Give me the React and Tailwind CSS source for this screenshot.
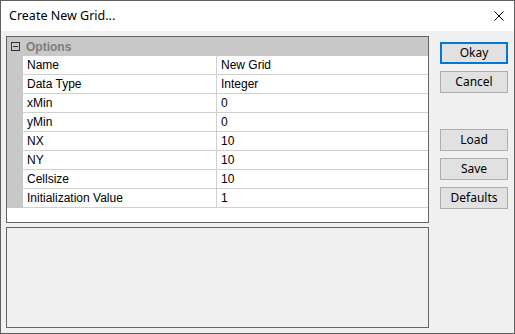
import React from 'react';

const rows = [
  ['Name', 'New Grid'],
  ['Data Type', 'Integer'],
  ['xMin', '0'],
  ['yMin', '0'],
  ['NX', '10'],
  ['NY', '10'],
  ['Cellsize', '10'],
  ['Initialization Value', '1'],
];

const uiFont = { fontFamily: '"Segoe UI", "Noto Sans", sans-serif' };
const gridFont = { fontFamily: '"Liberation Sans", Arial, sans-serif' };

const Button = ({ label, primary }) => (
  <button
    type="button"
    style={uiFont}
    className={
      primary
        ? 'flex h-[22px] w-[68px] items-center justify-center border-2 border-[#0078d7] bg-[#e1e1e1] text-[12px] leading-none text-black'
        : 'flex h-[22px] w-[68px] items-center justify-center border border-[#adadad] bg-[#e1e1e1] text-[12px] leading-none text-black'
    }
  >
    {label}
  </button>
);

export default function App() {
  return (
    <div className="flex h-[334px] w-[515px] flex-col border border-[#5f5f5f] bg-[#f0f0f0]">
      {/* title bar */}
      <div className="flex h-[30px] items-center justify-between bg-white pl-[8px] pr-[10px]">
        <span style={uiFont} className="text-[12.5px] text-black">Create New Grid...</span>
        <svg width="10" height="10" viewBox="0 0 10 10" className="mt-[-1px]">
          <path d="M0.5 0.5 L9.5 9.5 M9.5 0.5 L0.5 9.5" stroke="#000" strokeWidth="1" />
        </svg>
      </div>

      {/* body */}
      <div className="flex flex-1 gap-[11px] pb-[5px] pl-[5px] pr-[6px] pt-[5px]">
        <div className="flex w-[423px] flex-col gap-[4px]">
          {/* property grid */}
          <div style={gridFont} className="flex h-[187px] flex-col border border-[#646464] bg-white text-[12px] text-black">
            <div className="flex h-[19px] items-center bg-[#c8c8c8]">
              <div className="flex w-[16px] justify-center">
                <div className="flex h-[9px] w-[9px] items-center justify-center border border-[#333]">
                  <div className="h-px w-[5px] bg-[#333]" />
                </div>
              </div>
              <span className="pl-[3px] font-bold text-[#7d7d7d]">Options</span>
            </div>
            {rows.map(([k, v]) => (
              <div key={k} className="flex h-[19px]">
                <div className="w-[16px] bg-[#c8c8c8]" />
                <div className="flex w-[194px] items-center border-b border-r border-[#d0d0d0] pl-[4px]">{k}</div>
                <div className="flex flex-1 items-center border-b border-[#d0d0d0] pl-[4px]">{v}</div>
              </div>
            ))}
          </div>
          {/* description */}
          <div className="h-[101px] border border-[#646464] bg-[#f0f0f0]" />
        </div>

        <div className="flex flex-col pt-[6px]">
          <Button label="Okay" primary />
          <div className="mt-[7px]">
            <Button label="Cancel" />
          </div>
          <div className="mt-[36px] flex flex-col gap-[7px]">
            <Button label="Load" />
            <Button label="Save" />
            <Button label="Defaults" />
          </div>
        </div>
      </div>
    </div>
  );
}
